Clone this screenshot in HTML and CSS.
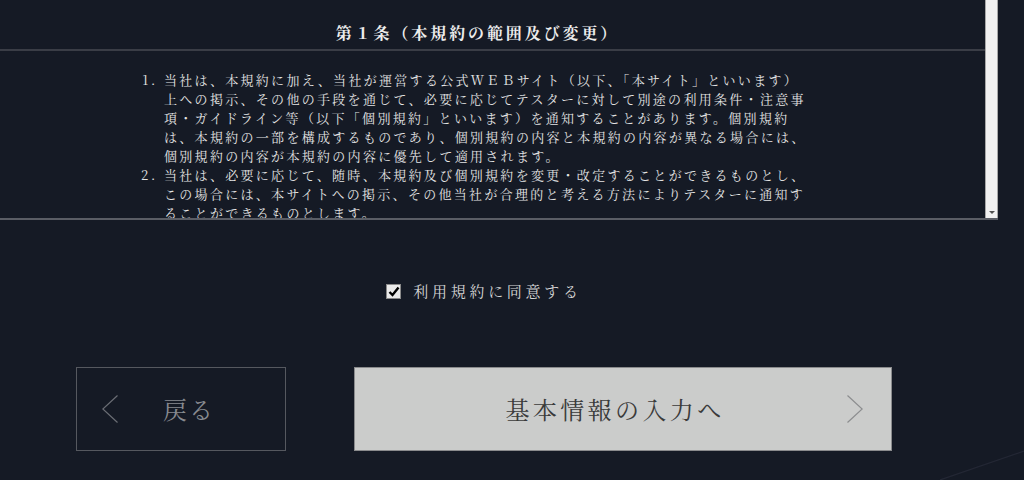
FILE: index.html
```html
<!DOCTYPE html>
<html lang="ja">
<head>
    <meta charset="UTF-8">
    <meta name="viewport" content="width=device-width, initial-scale=1.0">
    <title>利用規約への同意</title>
    <link rel="stylesheet" href="styles.css">
</head>
<body>

    <div class="terms">
        <div class="terms-body">
            <h2 class="terms-title">第１条（本規約の範囲及び変更）</h2>
            <ol class="terms-list">
                <li>当社は、本規約に加え、当社が運営する公式ＷＥＢサイト（以下、「本サイト」といいます）<br>上への掲示、その他の手段を通じて、必要に応じてテスターに対して別途の利用条件・注意事<br>項・ガイドライン等（以下「個別規約」といいます）を通知することがあります。個別規約<br>は、本規約の一部を構成するものであり、個別規約の内容と本規約の内容が異なる場合には、<br>個別規約の内容が本規約の内容に優先して適用されます。</li>
                <li>当社は、必要に応じて、随時、本規約及び個別規約を変更・改定することができるものとし、<br>この場合には、本サイトへの掲示、その他当社が合理的と考える方法によりテスターに通知す<br>ることができるものとします。</li>
            </ol>
        </div>
        <div class="scrollbar">
            <span class="scrollbar-arrow"></span>
        </div>
    </div>

    <label class="agree">
        <span class="agree-box">
            <svg width="12" height="11" viewBox="0 0 12 11"><path d="M1.5 6 L4.5 9 L10.5 1.5" fill="none" stroke="#000" stroke-width="2.4"/></svg>
        </span>
        <span class="agree-text">利用規約に同意する</span>
    </label>

    <div class="actions">
        <button class="btn btn-back" type="button">
            <svg class="chevron" width="16" height="28" viewBox="0 0 16 28"><path d="M15.5 0.5 L0.8 14 L15.5 27.5" fill="none" stroke="#6b6e75" stroke-width="1.2"/></svg>
            <span class="btn-label">戻る</span>
        </button>
        <button class="btn btn-next" type="button">
            <span class="btn-label">基本情報の入力へ</span>
            <svg class="chevron" width="16" height="28" viewBox="0 0 16 28"><path d="M0.5 0.5 L15.2 14 L0.5 27.5" fill="none" stroke="#8c8d8f" stroke-width="1.2"/></svg>
        </button>
    </div>

    <svg class="deco" width="84" height="30" viewBox="0 0 84 30"><path d="M0 30 L84 1" stroke="#232734" stroke-width="1.2"/></svg>

</body>
</html>
```

FILE: styles.css
```css
html, body {
    margin: 0;
    height: 100%;
}
body {
    font-family: "Noto Serif CJK JP", "Noto Sans CJK JP", serif;
    background-color: #151a25;
    color: #e4e4e4;
    position: relative;
    overflow: hidden;
}
.terms {
    display: flex;
    width: 998px;
    height: 218px;
    border-bottom: 2px solid #5a5d65;
}
.terms-body {
    flex: 1;
    overflow: hidden;
}
.terms-title {
    margin: 0;
    padding: 21px 30px 4px 0;
    font-size: 16px;
    line-height: 24px;
    font-weight: bold;
    letter-spacing: 2.9px;
    text-align: center;
    color: #ececec;
    border-bottom: 2px solid #3a3d46;
}
.terms-list {
    margin: 19px 0 0 164px;
    padding: 0;
    font-size: 13px;
    line-height: 19px;
    letter-spacing: 2.3px;
    white-space: nowrap;
}
.terms-list li::marker {
    letter-spacing: 2.7px;
}
.scrollbar {
    width: 11px;
    background-color: #f1f1f1;
    border-left: 1px solid #a8a8a8;
    border-right: 1px solid #a8a8a8;
    display: flex;
    align-items: flex-end;
    justify-content: center;
}
.scrollbar-arrow {
    width: 0;
    height: 0;
    margin-bottom: 4px;
    border-left: 3px solid transparent;
    border-right: 3px solid transparent;
    border-top: 3px solid #505050;
}
.agree {
    display: flex;
    align-items: center;
    justify-content: center;
    gap: 12px;
    margin: 60px 0 0 -56px;
    height: 22px;
    cursor: pointer;
}
.agree-box {
    width: 15px;
    height: 15px;
    background-color: #eaeaea;
    border: 1px solid #8a8a8a;
    box-sizing: border-box;
    display: flex;
    align-items: center;
    justify-content: center;
}
.agree-text {
    font-size: 15px;
    line-height: 22px;
    letter-spacing: 3.7px;
    color: #d6d6d6;
}
.actions {
    display: flex;
    gap: 68px;
    margin-top: 65px;
    padding-left: 76px;
}
.btn {
    display: flex;
    align-items: center;
    height: 84px;
    padding: 0 25px;
    box-sizing: border-box;
    font-family: inherit;
    cursor: pointer;
}
.btn-label {
    flex: 1;
    text-align: center;
    font-size: 24px;
    line-height: 30px;
}
.btn-back {
    width: 210px;
    background-color: transparent;
    border: 1px solid #55585f;
}
.btn-back .btn-label {
    color: #878a90;
    letter-spacing: 2px;
}
.btn-next {
    width: 538px;
    padding: 0 28px;
    background-color: #cbcccb;
    border: 1px solid #8a8b8d;
}
.btn-next .btn-label {
    color: #3a3a3a;
    letter-spacing: 3.4px;
}
.deco {
    position: absolute;
    right: 0;
    bottom: 0;
}
```
